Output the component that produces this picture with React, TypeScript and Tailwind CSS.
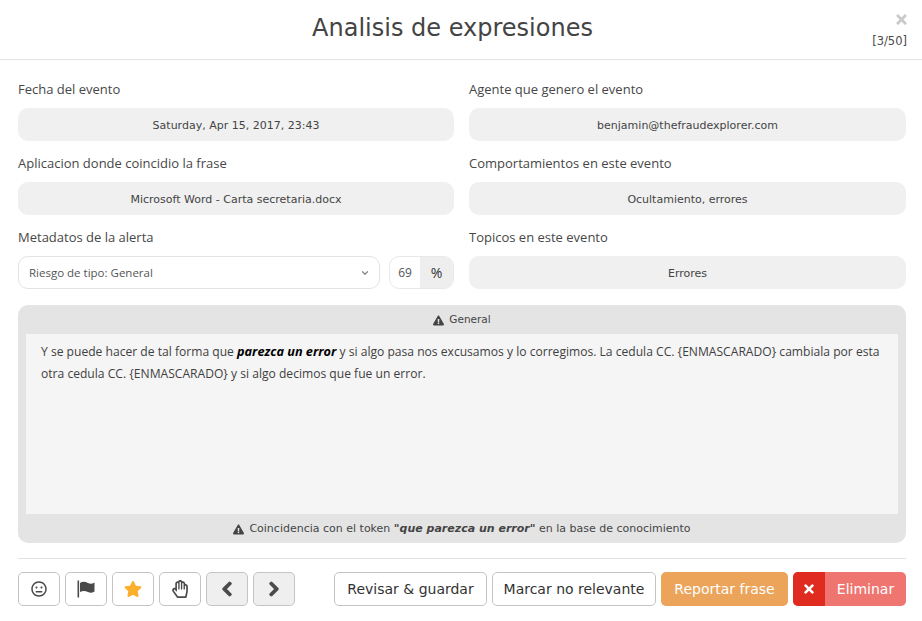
import { FaChevronLeft, FaChevronRight, FaExclamationTriangle, FaRegHandPaper, FaRegMeh, FaStar, FaTimes } from "react-icons/fa";
import { ChevronDown } from "lucide-react";

const openSans = "font-['Open_Sans',sans-serif]";
const dejavu = "font-['DejaVu_Sans',sans-serif]";

function Label({ children }: { children: React.ReactNode }) {
  return <div className={`${openSans} h-[18px] mb-[10px] text-[13px] leading-[18px] text-[#474747]`}>{children}</div>;
}

function Field({ label, value }: { label: string; value: string }) {
  return (
    <div className="flex flex-col">
      <Label>{label}</Label>
      <div className="h-[33px] pt-[3px] rounded-[10px] bg-[#f0f0f0] flex items-center justify-center text-[11px] text-[#444]">
        {value}
      </div>
    </div>
  );
}

function IconButton({ children, gray }: { children: React.ReactNode; gray?: boolean }) {
  return (
    <div
      className={`w-[42px] h-[34px] rounded-[5px] border border-[#c4c4c4] flex items-center justify-center text-[#4a4a4a] ${
        gray ? "bg-[#efefef]" : "bg-white"
      }`}
    >
      {children}
    </div>
  );
}

export default function App() {
  return (
    <div className={`${dejavu} w-[922px] h-[621px] bg-white overflow-hidden`}>
      <div className="relative h-[60px] border-b border-[#e2e2e2] flex items-center justify-center pr-[17px]">
        <h1 className="text-[24px] text-[#444] pb-[3px]">Analisis de expresiones</h1>
        <FaTimes className="absolute left-[894px] top-[12px] text-[#c9c9c9] text-[15px]" />
        <span className="absolute right-[15px] top-[33px] text-[11.5px] text-[#4a4a4a]">[3/50]</span>
      </div>

      <div className="pl-[18px] pr-[16px] pt-[20px]">
        <div className="grid grid-cols-[436px_437px] gap-x-[15px] gap-y-[13px]">
          <Field label="Fecha del evento" value="Saturday, Apr 15, 2017, 23:43" />
          <Field label="Agente que genero el evento" value="benjamin@thefraudexplorer.com" />
          <Field label="Aplicacion donde coincidio la frase" value="Microsoft Word - Carta secretaria.docx" />
          <Field label="Comportamientos en este evento" value="Ocultamiento, errores" />
          <div className="flex flex-col">
            <Label>Metadatos de la alerta</Label>
            <div className="flex gap-[9px]">
              <div className="w-[362px] h-[33px] rounded-[10px] border border-[#e3e3e3] flex items-center justify-between pl-[10px] pr-[9px]">
                <span className={`${openSans} text-[11.5px] text-[#555]`}>Riesgo de tipo: General</span>
                <ChevronDown size={10} strokeWidth={3} className="text-[#888]" />
              </div>
              <div className="w-[65px] h-[33px] rounded-[10px] border border-[#e8e8e8] flex overflow-hidden">
                <span className={`${openSans} flex-1 flex items-center justify-center text-[12px] text-[#555]`}>69</span>
                <span className={`${openSans} w-[33px] bg-[#eeeeee] flex items-center justify-center text-[14px] text-[#333]`}>%</span>
              </div>
            </div>
          </div>
          <Field label="Topicos en este evento" value="Errores" />
        </div>

        <div className="mt-[16px] h-[238px] rounded-[10px] bg-[#e4e4e4] flex flex-col px-[8px]">
          <div className="h-[29px] pt-[1px] flex items-center justify-center gap-[5px] text-[10.5px] text-[#444]">
            <FaExclamationTriangle className="text-[11px] text-[#444]" />
            <span>General</span>
          </div>
          <div className={`${openSans} h-[180px] bg-[#f5f5f5] px-[15px] pt-[7px] text-[12.1px] leading-[21.5px] text-[#3f3f3f]`}>
            Y se puede hacer de tal forma que <b className="italic text-black text-[12.7px]">parezca un error</b> y si algo pasa nos excusamos y lo corregimos. La cedula CC. {"{ENMASCARADO}"} cambiala por esta otra cedula CC. {"{ENMASCARADO}"} y si algo decimos que fue un error.
          </div>
          <div className="h-[29px] pt-[2px] flex items-center justify-center gap-[5px] text-[11px] text-[#444]">
            <FaExclamationTriangle className="text-[11px] text-[#444]" />
            <span>
              Coincidencia con el token <b className="italic">"que parezca un error"</b> en la base de conocimiento
            </span>
          </div>
        </div>

        <div className="mt-[15px] border-t border-[#e2e2e2] pt-[13px] flex items-center justify-between">
          <div className="flex gap-[5px]">
            <IconButton><FaRegMeh className="text-[16px]" /></IconButton>
            <IconButton>
              <svg width="18" height="18" viewBox="0 0 18 18" fill="currentColor">
                <rect x="0.5" y="0.5" width="1.6" height="17" />
                <path d="M3 3 C6 1 8.5 2 11 3 C13 4 15 4 17.5 2.5 V11.5 C15 13 13 13 11 12 C8.5 11 6 10.5 3 12 Z" />
              </svg>
            </IconButton>
            <IconButton><FaStar className="text-[18px] text-[#fbb02d]" /></IconButton>
            <IconButton><FaRegHandPaper className="text-[18px]" /></IconButton>
            <IconButton gray><FaChevronLeft className="text-[16px] stroke-[40]" /></IconButton>
            <IconButton gray><FaChevronRight className="text-[16px] stroke-[40]" /></IconButton>
          </div>
          <div className="flex gap-[5px] text-[14px]">
            <div className="w-[153px] h-[34px] rounded-[5px] border border-[#c4c4c4] flex items-center justify-center text-[#333]">Revisar &amp; guardar</div>
            <div className="w-[164px] h-[34px] rounded-[5px] border border-[#c4c4c4] flex items-center justify-center text-[#333]">Marcar no relevante</div>
            <div className="w-[127px] h-[34px] rounded-[5px] bg-[#eba45a] flex items-center justify-center text-white">Reportar frase</div>
            <div className="w-[113px] h-[34px] rounded-[5px] bg-[#ee7570] flex overflow-hidden text-white">
              <span className="w-[32px] bg-[#e02c20] flex items-center justify-center"><FaTimes className="text-[14px]" /></span>
              <span className="flex-1 flex items-center justify-center">Eliminar</span>
            </div>
          </div>
        </div>
      </div>
    </div>
  );
}
